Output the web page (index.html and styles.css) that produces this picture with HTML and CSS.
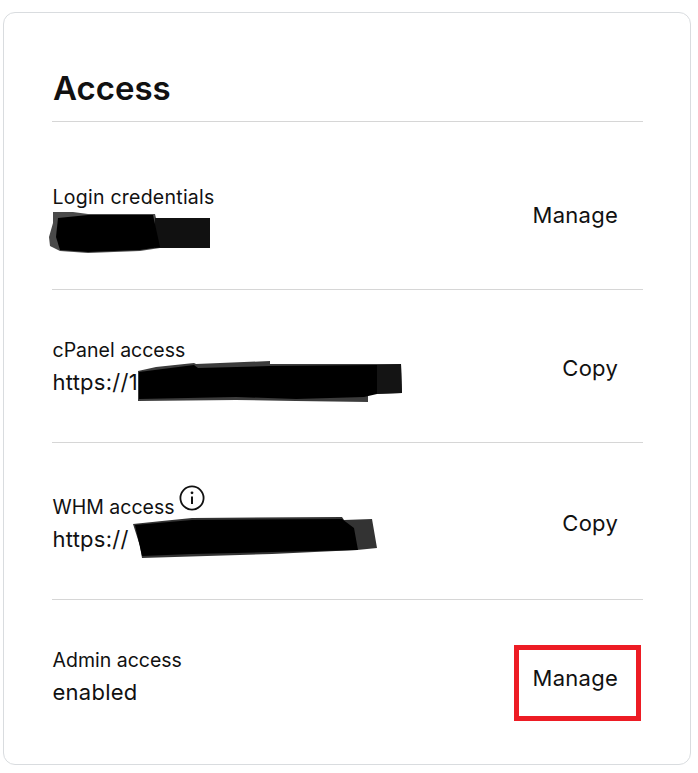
FILE: index.html
```html
<!DOCTYPE html>
<html lang="en">
<head>
<meta charset="utf-8">
<title>Access</title>
<link rel="stylesheet" href="styles.css">
</head>
<body>
<main class="card">
  <h1 class="title">Access</h1>

  <section class="row row-login">
    <div class="info">
      <div class="label">Login credentials</div>
      <div class="value value-plain">
        <span class="login-text">i</span>
        <svg class="scribble scribble-login" width="170" height="44" viewBox="0 0 170 44" aria-hidden="true">
          <polygon points="1,25 5,11 5,0 25,0 40,2 107,2 108,6 162,6 162,36 112,36 92,39 40,41 12,39 2,34" fill="#4a4a4a"/>
          <polygon points="107,6 162,6 162,36 107,36" fill="#111"/>
          <polygon points="10,6 40,3 105,3 112,35 92,38 40,40 12,38 8,25" fill="#000"/>
        </svg>
      </div>
    </div>
    <button class="action" type="button">Manage</button>
  </section>

  <section class="row row-cpanel">
    <div class="info">
      <div class="label">cPanel access</div>
      <div class="value">https://1
        <svg class="scribble scribble-cpanel" width="268" height="46" viewBox="0 0 268 46" aria-hidden="true">
          <polygon points="2,12 20,8 58,4 60,5 134,2 134,5 265,5 266,34 232,35 232,43 160,42 100,41 2,42" fill="#3c3c3c"/>
          <polygon points="241,6 265,5 266,34 241,35" fill="#141414"/>
          <polygon points="3,13 58,6 62,9 134,7 241,6 241,35 228,38 160,40 100,38 3,40" fill="#000"/>
        </svg>
      </div>
    </div>
    <button class="action" type="button">Copy</button>
  </section>

  <section class="row row-whm">
    <div class="info">
      <div class="label">WHM access
        <svg class="info-icon" width="26" height="26" viewBox="0 0 26 26" aria-hidden="true">
          <circle cx="13" cy="13" r="11.6" fill="none" stroke="#111" stroke-width="1.8"/>
          <circle cx="13" cy="7.8" r="1.4" fill="#111"/>
          <path d="M13 11.5v7.6" fill="none" stroke="#111" stroke-width="2"/>
        </svg>
      </div>
      <div class="value">https://
        <svg class="scribble scribble-whm" width="248" height="46" viewBox="0 0 248 46" aria-hidden="true">
          <polygon points="1,8 30,5 60,2 210,1 212,4 240,3 245,32 225,34 140,38 10,42 8,30" fill="#333"/>
          <polygon points="3,9 60,4 210,3 222,12 226,34 140,36 60,38 10,40" fill="#000"/>
        </svg>
      </div>
    </div>
    <button class="action" type="button">Copy</button>
  </section>

  <section class="row row-admin">
    <div class="info">
      <div class="label">Admin access</div>
      <div class="value">enabled</div>
    </div>
    <button class="action action-marked" type="button">Manage</button>
  </section>
</main>
</body>
</html>
```

FILE: styles.css
```css
* { box-sizing: border-box; }

html, body { margin: 0; padding: 0; background: #fff; }

body {
  font-family: Inter, "Liberation Sans", sans-serif;
  color: #111;
  padding: 12px 7px 8px 3px;
}

.card {
  height: 753px;
  border: 1px solid #d9dcdf;
  border-radius: 12px;
  padding: 48px 47px 0 48px;
  background: #fff;
}

.title {
  margin: 0;
  height: 61px;
  padding-left: 1px;
  font-size: 33px;
  line-height: 54px;
  font-weight: 600;
  border-bottom: 1px solid #d6d6d6;
}

.row {
  display: flex;
  align-items: flex-start;
  justify-content: space-between;
  border-bottom: 1px solid #d6d6d6;
}

.row-login { height: 168px; padding-top: 62px; }
.row-cpanel { height: 153px; padding-top: 47px; }
.row-whm { height: 157px; padding-top: 51px; }
.row-admin { border-bottom: 0; padding-top: 47px; }

.info { padding-left: 0.5px; }

.label {
  position: relative;
  font-size: 19.5px;
  line-height: 26px;
}

.row-login .label { letter-spacing: 0.25px; }

.value {
  position: relative;
  margin-top: 4px;
  font-size: 22px;
  line-height: 30px;
  font-weight: 400;
  letter-spacing: 0.25px;
}

.value-plain { height: 32px; font-size: 18px; }

.scribble { position: absolute; }
.scribble-login { left: -4.5px; top: -2px; }
.scribble-cpanel { left: 83.5px; top: -8px; }
.scribble-whm { left: 79.5px; top: -8px; }

.info-icon { position: absolute; left: 126.5px; top: -9px; }

.action {
  position: relative;
  margin: 16px 0 0;
  padding: 0 25px;
  border: 0;
  background: none;
  font: 400 22px/30px Inter, "Liberation Sans", sans-serif;
  letter-spacing: 0.25px;
  color: #111;
}

.row-whm .action { margin-top: 14px; }

.action-marked::after {
  content: "";
  position: absolute;
  left: 6px;
  right: 2px;
  top: -18px;
  height: 66px;
  border: 5px solid #ed1c24;
}
```
